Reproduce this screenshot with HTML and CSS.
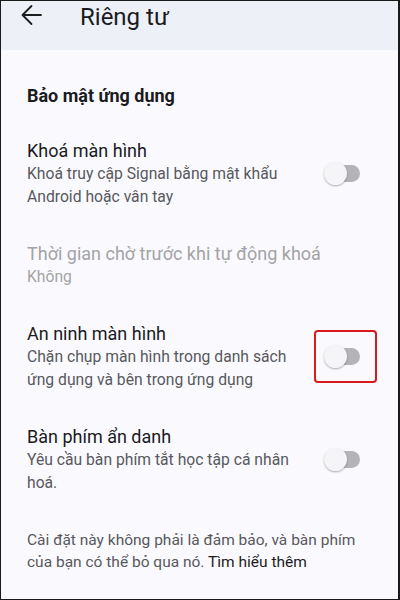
FILE: index.html
```html
<!DOCTYPE html>
<html lang="vi">
<head>
  <meta charset="UTF-8">
  <meta name="viewport" content="width=device-width, initial-scale=1.0">
  <title>Riêng tư</title>
  <link rel="stylesheet" href="styles.css">
</head>
<body>

  <div class="screen">
    <header class="topbar">
      <svg class="back" width="24" height="24" viewBox="0 0 24 24">
        <path d="M21 12H2.5M2.5 12L11.5 3M2.5 12L11.5 21" fill="none" stroke="#1d1d20" stroke-width="1.8" stroke-linecap="round" stroke-linejoin="round"/>
      </svg>
      <h1>Riêng tư</h1>
    </header>

    <main class="content">
      <h2 class="section-title">Bảo mật ứng dụng</h2>

      <div class="item">
        <div class="item-text">
          <div class="item-title">Khoá màn hình</div>
          <div class="item-sub">Khoá truy cập Signal bằng mật khẩu Android hoặc vân tay</div>
        </div>
        <div class="switch"><span class="knob"></span></div>
      </div>

      <div class="item disabled">
        <div class="item-text">
          <div class="item-title">Thời gian chờ trước khi tự động khoá</div>
          <div class="item-sub">Không</div>
        </div>
      </div>

      <div class="item">
        <div class="item-text">
          <div class="item-title">An ninh màn hình</div>
          <div class="item-sub">Chặn chụp màn hình trong danh sách ứng dụng và bên trong ứng dụng</div>
        </div>
        <div class="switch">
          <span class="knob"></span>
          <span class="highlight"></span>
        </div>
      </div>

      <div class="item">
        <div class="item-text">
          <div class="item-title">Bàn phím ẩn danh</div>
          <div class="item-sub">Yêu cầu bàn phím tắt học tập cá nhân hoá.</div>
        </div>
        <div class="switch"><span class="knob"></span></div>
      </div>

      <p class="note">Cài đặt này không phải là đảm bảo, và bàn phím của bạn có thể bỏ qua nó. <span class="learn">Tìm hiểu thêm</span></p>
    </main>
  </div>

</body>
</html>
```

FILE: styles.css
```css
body { /* Page reset */
  margin: 0;
  padding: 0;
  font-family: Roboto, "Noto Sans", sans-serif;
  background: #fafafe;
  color: #1b1b1e;
}

.screen { /* Framed phone screenshot */
  box-sizing: border-box;
  width: 400px;
  height: 600px;
  overflow: hidden;
  border: 1px solid #1a1a1a;
  border-right-width: 2px;
  background: #fafafe;
}

.topbar { /* Title bar */
  height: 49px;
  background: #edf0f7;
  display: flex;
  align-items: flex-start;
  padding-left: 19px;
}

.back {
  margin-top: 1.5px;
}

.topbar h1 {
  margin: 1px 0 0 36px;
  font-size: 24px;
  line-height: 30px;
  font-weight: 400;
  color: #1b1b1e;
}

.section-title {
  margin: 0;
  padding: 35px 26px 15px;
  font-size: 18px;
  line-height: 22px;
  font-weight: 700;
  color: #1b1b1e;
}

.item { /* One settings row */
  display: flex;
  align-items: center;
  gap: 24px;
  padding: 17.5px 38px 17.5px 26px;
}

.item-text {
  flex: 1;
}

.item-title {
  font-size: 18px;
  line-height: 22px;
  color: #1b1b1e;
}

.item-sub {
  font-size: 15.7px;
  line-height: 23px;
  color: #58585d;
}

.item.disabled .item-title,
.item.disabled .item-sub {
  color: #a3a3a6;
}

.switch { /* Toggle off state */
  position: relative;
  width: 36px;
  height: 23px;
  flex-shrink: 0;
}

.switch::before { /* Track */
  content: "";
  position: absolute;
  left: 4px;
  right: 0;
  top: 3px;
  height: 17px;
  border-radius: 9px;
  background: #b3b3b8;
}

.knob {
  position: absolute;
  left: 0;
  top: 0;
  width: 23px;
  height: 23px;
  border-radius: 50%;
  background: #f5f5f7;
  box-shadow: 0 1px 2px rgba(0, 0, 0, 0.3);
}

.highlight { /* Red annotation box */
  position: absolute;
  left: -10px;
  top: -15px;
  width: 63px;
  height: 53px;
  box-sizing: border-box;
  border: 2.5px solid #d8191f;
  border-radius: 4px;
}

.note {
  margin: 0;
  padding: 17.5px 26px;
  font-size: 15.5px;
  line-height: 22.5px;
  color: #58585d;
}

.learn {
  color: #1b1b1e;
}
```
